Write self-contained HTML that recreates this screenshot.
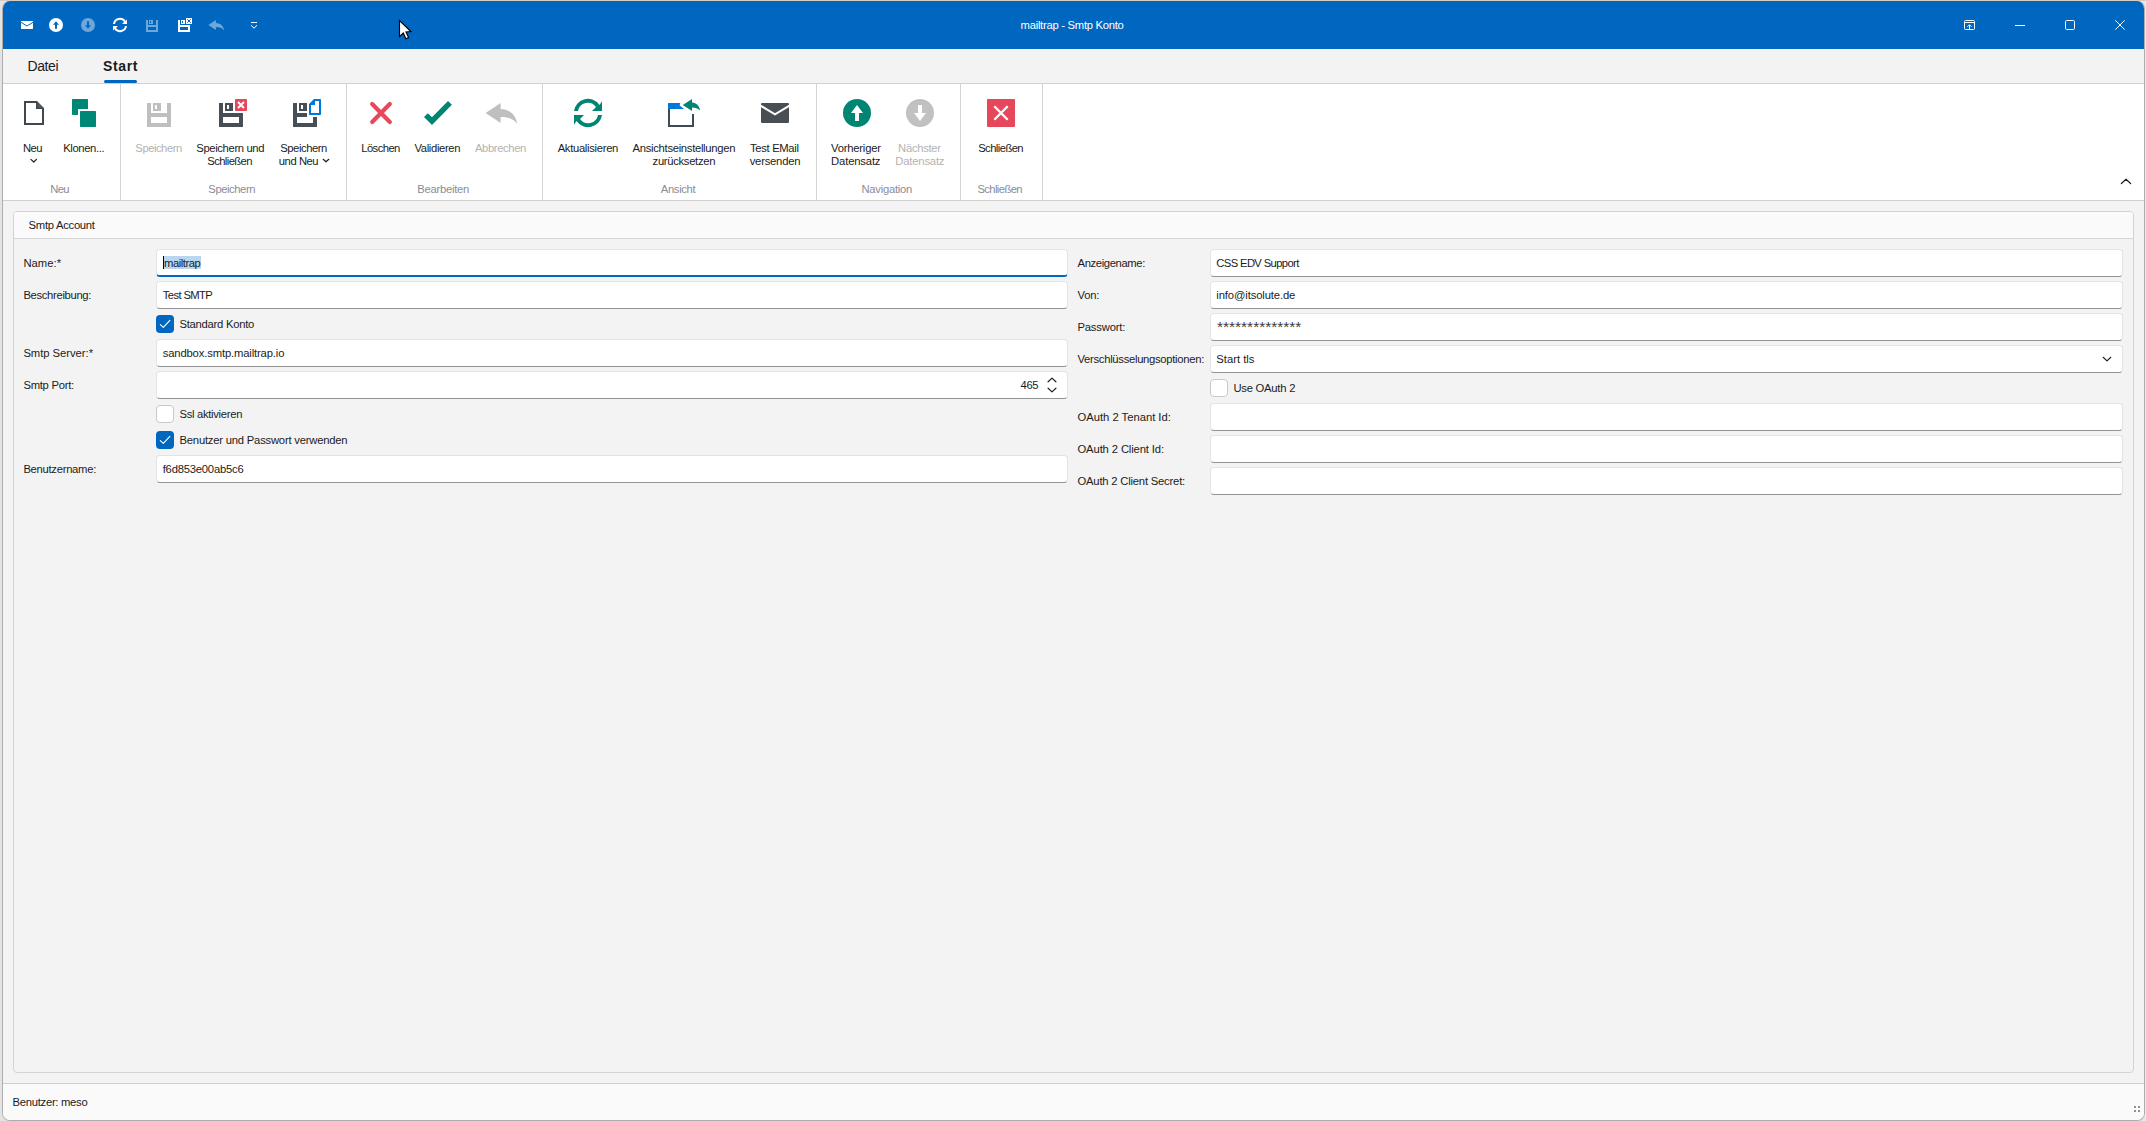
<!DOCTYPE html>
<html lang="de">
<head>
<meta charset="utf-8">
<title>mailtrap - Smtp Konto</title>
<style>
*{box-sizing:border-box;margin:0;padding:0}
html,body{width:2146px;height:1121px;overflow:hidden}
body{background:#e4e4e4;font-family:"Liberation Sans",sans-serif;font-size:11.25px;color:#1b1b1b;position:relative}
.toprow{position:absolute;left:0;top:0;width:2146px;height:1px;background:#d8ccc0}
.win{position:absolute;left:2px;top:1px;width:2143px;height:1120px;border:1px solid #adadad;border-top:0;border-radius:8px;overflow:hidden;background:#f3f3f3}
.o{position:absolute;left:-3px;top:-1px;width:2146px;height:1121px}
.abs,.o>*{position:absolute}
.title{left:0;top:1px;width:2146px;height:48px;background:#0067c0}
.ttext{left:1020px;top:18px;width:104px;height:14px;line-height:14px;color:#fff;font-size:11px;white-space:nowrap;text-align:center}
.tabs{left:0;top:49px;width:2146px;height:34px;background:#f3f3f3}
.tabline{left:0;top:83px;width:2146px;height:1px;background:#d1d1d1}
.tab{top:56px;height:18px;line-height:18px;font-size:14px;white-space:nowrap;color:#1b1b1b}
.tabul{left:104px;top:80px;width:33px;height:3px;border-radius:2px;background:#0067c0}
.ribbon{left:0;top:84px;width:2146px;height:116px;background:#fff}
.ribline{left:0;top:200px;width:2146px;height:1px;background:#cfcfcf}
.sep{top:84px;width:1px;height:116px;background:#d4d4d4}
.lbl{height:13px;line-height:13px;white-space:nowrap;text-align:center;transform:translateX(-50%);color:#1b1b1b}
.lbl.dis{color:#b4b4b4}
.cap{top:183px;height:13px;line-height:13px;white-space:nowrap;text-align:center;transform:translateX(-50%);color:#8d8d96}
.panel{left:13px;top:211px;width:2121px;height:862px;border:1px solid #d3d3d3;border-radius:4px;background:#f3f3f3}
.phead{left:14px;top:212px;width:2119px;height:26px;background:#fafafa;border-radius:3px 3px 0 0}
.pline{left:14px;top:238px;width:2119px;height:1px;background:#d6d6d6}
.ptitle{left:28px;top:218px;height:14px;line-height:14px;white-space:nowrap}
.fl{height:14px;line-height:14px;white-space:nowrap}
.inp{height:28px;background:#fff;border:1px solid #e3e3e3;border-bottom:1px solid #949494;border-radius:4px}
.inp.l{left:156px;width:912px}
.inp.r{left:1210px;width:913px}
.inp.foc{border-bottom:2px solid #0067c0}
.tx{height:14px;line-height:14px;white-space:pre;color:#1b1b1b}
.cb{width:18px;height:18px;border-radius:4px}
.cb.on{background:#0067c0}
.cb.off{background:#fff;border:1px solid #c9c9c9}
.status{left:0;top:1084px;width:2146px;height:37px;background:#fafafa}
.sline{left:0;top:1083px;width:2146px;height:1px;background:#cfcfcf}
.stext{left:12px;top:1095px;height:14px;line-height:14px;white-space:nowrap}
.dot{width:2px;height:2px;background:#919191}
svg{position:absolute;overflow:visible}
</style>
</head>
<body>
<div class="toprow"></div>
<div class="abs" style="left:2145px;top:1px;width:1px;height:1120px;background:#ececec"></div>
<div class="win"><div class="o">

<!-- TITLE BAR -->
<div class="title"></div>
<svg style="left:0;top:0" width="2146" height="49" viewBox="0 0 2146 49">
<defs>
 <g id="floppys" shape-rendering="crispEdges">
  <path d="M0 0 H2 V5 H10 V0 H12 V12 H0 Z M2 7 V10 H10 V7 Z" fill-rule="evenodd"/>
  <path d="M3 0 H7 V4 H3 Z M4 1 V3 H5 V1 Z" fill-rule="evenodd"/>
 </g>
</defs>
<!-- mail -->
<rect x="21" y="21" width="12" height="8" rx="0.4" fill="#fff"/>
<path d="M20.8 22.2 L27 26 L33.2 22.2" stroke="#0067c0" stroke-width="1" fill="none"/>
<!-- up -->
<circle cx="56" cy="25" r="7" fill="#fff"/>
<path d="M56 21.2 L59 24.7 L57 24.7 L57 28.8 L55 28.8 L55 24.7 L53 24.7 Z" fill="#0067c0"/>
<!-- down (disabled) -->
<circle cx="88" cy="25" r="7" fill="#fff" fill-opacity="0.43"/>
<path d="M88 28.8 L91 25.3 L89 25.3 L89 21.2 L87 21.2 L87 25.3 L85 25.3 Z" fill="#0067c0"/>
<!-- refresh -->
<use href="#refr" fill="#fff" transform="translate(120 25) scale(0.5)"/>
<!-- save (disabled) -->
<use href="#floppys" x="146" y="20" fill="#fff" fill-opacity="0.43"/>
<!-- save and close -->
<g fill="#fff" shape-rendering="crispEdges">
 <path d="M178 20 H180 V25 H190 V32 H178 Z M180 27 V30 H188 V27 Z" fill-rule="evenodd"/>
 <path d="M181 20 H185 V24 H181 Z M182 21 V23 H183 V21 Z" fill-rule="evenodd"/>
 <rect x="186" y="18" width="6" height="6"/>
</g>
<path d="M187.3 19.3 L190.7 22.7 M190.7 19.3 L187.3 22.7" stroke="#0067c0" stroke-width="1" fill="none"/>
<!-- undo (disabled) -->
<use href="#undo" fill="#fff" fill-opacity="0.43" transform="translate(208.4 20.1) scale(0.5)"/>
<!-- customize -->
<path d="M251 22.5 H257" stroke="#fff" stroke-width="1" fill="none"/>
<path d="M251 25.3 L254 28.2 L257 25.3" stroke="#fff" stroke-width="1" fill="none"/>
<!-- mouse cursor -->
<path d="M399.5 20.7 L399.5 36.6 L403.3 33 L405.9 38.7 L408.6 37.5 L406 32 L410.9 31.6 Z" fill="#fff" stroke="#000" stroke-width="1.15" stroke-linejoin="miter"/>
</svg>

<svg style="left:0;top:0" width="2146" height="49" viewBox="0 0 2146 49">
<g stroke="#fff" stroke-width="1" fill="none">
 <rect x="1964.5" y="20.5" width="10" height="9" rx="1"/>
 <path d="M1964.5 22.5 H1974.5 M1969.5 29 V25 M1967.4 26.8 L1969.5 24.7 L1971.6 26.8"/>
 <path d="M2015 25.5 H2025"/>
 <rect x="2065.500" y="20.500" width="9" height="9" rx="1.2"/>
 <path d="M2115.3 20.300 L2124.700 29.700 M2124.700 20.300 L2115.300 29.700"/>
</g>
</svg>


<!-- TABS -->
<div class="tabs"></div>
<div class="tabline"></div>
<div class="tabul"></div>

<!-- RIBBON -->
<div class="ribbon"></div>
<div class="ribline"></div>
<div class="sep" style="left:120px"></div>
<div class="sep" style="left:346px"></div>
<div class="sep" style="left:542px"></div>
<div class="sep" style="left:816px"></div>
<div class="sep" style="left:960px"></div>
<div class="sep" style="left:1042px"></div>
<svg style="left:0;top:0" width="2146" height="210" viewBox="0 0 2146 210">
<defs>
 <path id="refr" d="M-14 -2 A14 14 0 0 1 11.5 -8 L14 -11.7 L14 -2 L4 -2 L8 -6 A10 10 0 0 0 -10 -2 Z M14 2 A14 14 0 0 1 -11.5 8 L-14 11.7 L-14 2 L-4 2 L-8 6 A10 10 0 0 0 10 2 Z"/>
 <path id="undo" d="M0 10 L15 0 L15 6 C24.5 6.2 31 13 31.4 21 C28.5 16 23 14 15 14 L15 20 Z"/>
 <path id="arrup" d="M0 -8 L6 0 L2 0 L2 8 L-2 8 L-2 0 L-6 0 Z"/>
 <g id="floppy" shape-rendering="crispEdges">
  <path d="M0 0 H4 V10 H20 V0 H24 V24 H0 Z M4 14 V20 H20 V14 Z" fill-rule="evenodd"/>
  <path d="M6 0 H14 V8 H6 Z M8 2 V6 H10 V2 Z" fill-rule="evenodd"/>
 </g>
</defs>
<!-- Neu: document -->
<path d="M24 101 H37 L44 108 V125 H24 Z M26 103 V123 H42 V109 H36 V103 Z" fill="#3f484e" fill-rule="evenodd"/>
<path d="M37.6 102.6 L42.6 107.4 H37.6 Z" fill="#555d63"/>
<!-- Klonen -->
<g fill="#008775">
 <path d="M72.8 99 H87.2 Q88 99 88 99.8 V109 H78 V115 H72.8 Q72 115 72 114.2 V99.8 Q72 99 72.8 99 Z"/>
 <rect x="80" y="111" width="16" height="16" rx="0.8"/>
</g>
<!-- Speichern (disabled) -->
<use href="#floppy" x="147" y="103" fill="#bfbfbf"/>
<!-- Speichern und Schliessen -->
<g fill="#474f55" shape-rendering="crispEdges">
 <path d="M219 103 H223 V113 H243 V127 H219 Z M223 117 V123 H239 V117 Z" fill-rule="evenodd"/>
 <path d="M225 103 H233 V111 H225 Z M227 105 V109 H229 V105 Z" fill-rule="evenodd"/>
</g>
<rect x="235" y="99" width="12" height="12" rx="0.8" fill="#e6475a"/>
<path d="M238 102 L244 108 M244 102 L238 108" stroke="#fff" stroke-width="1.9" fill="none"/>
<!-- Speichern und Neu -->
<g fill="#474f55" shape-rendering="crispEdges">
 <path d="M293 103 H297 V113 H307 V117 H297 V123 H313 V117 H317 V127 H293 Z"/>
 <path d="M299 103 H307 V111 H299 Z M301 105 V109 H303 V105 Z" fill-rule="evenodd"/>
</g>
<path d="M314 99 H320.2 Q321 99 321 99.8 V114.2 Q321 115 320.2 115 H309.8 Q309 115 309 114.2 V104 Z M315 101 V105 H311 V113 H319 V101 Z" fill="#0078d7" fill-rule="evenodd"/>
<!-- Loeschen -->
<path d="M372.2 104 L389.8 122 M389.8 104 L372.2 122" stroke="#e8485c" stroke-width="4.2" stroke-linecap="round" fill="none"/>
<!-- Validieren -->
<path d="M427.8 113.3 L424 117 L432 124.9 L451.9 104.7 L448 101.1 L432 117.2 Z" fill="#008573"/>
<!-- Abbrechen (disabled) -->
<use href="#undo" x="485.6" y="103" fill="#bfbfbf"/>
<!-- Aktualisieren -->
<use href="#refr" x="588" y="113" fill="#008573"/>
<!-- Ansichtseinstellungen -->
<path d="M668 103.6 Q668 103 668.6 103 H680.3 L679.6 105.4 L684 109 H668 Z" fill="#0078d7"/>
<g fill="#414a50" shape-rendering="crispEdges">
 <path d="M668 109 H670 V125 H692 V114 H694 V127 H668 Z"/>
</g>
<path d="M682.8 105 L692 99 L692 102.6 C696.5 102.8 699.5 106 700 110.4 C698 108.3 695.5 107.4 692 107.4 L692 111 Z" fill="#008573"/>
<!-- Test EMail -->
<rect x="761" y="103" width="28" height="20" rx="1" fill="#474f55"/>
<path d="M760.5 105.6 L775 114.4 L789.5 105.6" stroke="#fff" stroke-width="2" fill="none"/>
<!-- Vorheriger -->
<circle cx="857" cy="113" r="14" fill="#008573"/>
<use href="#arrup" x="857" y="113" fill="#fff"/>
<!-- Naechster (disabled) -->
<circle cx="920" cy="113" r="14" fill="#c1c1c1"/>
<use href="#arrup" fill="#fff" transform="translate(920 113) scale(1 -1)"/>
<!-- Schliessen -->
<rect x="987" y="99" width="28" height="28" rx="1" fill="#e6475a"/>
<path d="M994.3 106.3 L1007.7 119.7 M1007.7 106.3 L994.3 119.7" stroke="#fff" stroke-width="2.3" fill="none"/>
<!-- dropdown chevrons under Neu and next to "und Neu" -->
<path d="M30.9 159.4 L33.7 162 L36.5 159.4" stroke="#1f1f1f" stroke-width="1.2" stroke-linecap="round" stroke-linejoin="round" fill="none"/>
<path d="M323.2 159.3 L326 161.8 L328.8 159.3" stroke="#1f1f1f" stroke-width="1.2" stroke-linecap="round" stroke-linejoin="round" fill="none"/>
<!-- collapse ribbon -->
<path d="M2121.4 183.5 L2126 179.2 L2130.6 183.5" stroke="#1f1f1f" stroke-width="1.2" stroke-linecap="round" stroke-linejoin="round" fill="none"/>
</svg>

<div class="tx" style="top:141px;letter-spacing:-0.514px;left:32.44px;transform:translateX(-50%);">Neu</div>
<div class="tx" style="top:141px;letter-spacing:-0.38px;left:83.71px;transform:translateX(-50%);">Klonen...</div>
<div class="tx" style="top:141px;letter-spacing:-0.475px;left:158.56px;transform:translateX(-50%);color:#b3b3b3;">Speichern</div>
<div class="tx" style="top:141px;letter-spacing:-0.374px;left:230.21px;transform:translateX(-50%);">Speichern und</div>
<div class="tx" style="top:154px;letter-spacing:-0.592px;left:229.60px;transform:translateX(-50%);">Schließen</div>
<div class="tx" style="top:141px;letter-spacing:-0.441px;left:303.58px;transform:translateX(-50%);">Speichern</div>
<div class="tx" style="top:154px;letter-spacing:-0.45px;left:278.8px;">und Neu</div>
<div class="tx" style="top:141px;letter-spacing:-0.578px;left:380.51px;transform:translateX(-50%);">Löschen</div>
<div class="tx" style="top:141px;letter-spacing:-0.36px;left:437.32px;transform:translateX(-50%);">Validieren</div>
<div class="tx" style="top:141px;letter-spacing:-0.38px;left:500.41px;transform:translateX(-50%);color:#b3b3b3;">Abbrechen</div>
<div class="tx" style="top:141px;letter-spacing:-0.309px;left:587.85px;transform:translateX(-50%);">Aktualisieren</div>
<div class="tx" style="top:141px;letter-spacing:-0.301px;left:683.85px;transform:translateX(-50%);">Ansichtseinstellungen</div>
<div class="tx" style="top:154px;letter-spacing:-0.315px;left:683.84px;transform:translateX(-50%);">zurücksetzen</div>
<div class="tx" style="top:141px;letter-spacing:-0.329px;left:774.34px;transform:translateX(-50%);">Test EMail</div>
<div class="tx" style="top:154px;letter-spacing:-0.216px;left:774.99px;transform:translateX(-50%);">versenden</div>
<div class="tx" style="top:141px;letter-spacing:-0.211px;left:855.89px;transform:translateX(-50%);">Vorheriger</div>
<div class="tx" style="top:154px;letter-spacing:-0.162px;left:855.72px;transform:translateX(-50%);">Datensatz</div>
<div class="tx" style="top:141px;letter-spacing:-0.291px;left:919.45px;transform:translateX(-50%);color:#b3b3b3;">Nächster</div>
<div class="tx" style="top:154px;letter-spacing:-0.184px;left:919.81px;transform:translateX(-50%);color:#b3b3b3;">Datensatz</div>
<div class="tx" style="top:141px;letter-spacing:-0.57px;left:1000.62px;transform:translateX(-50%);">Schließen</div>
<div class="tx" style="top:182px;letter-spacing:-0.747px;left:59.53px;transform:translateX(-50%);color:#8c8c95;">Neu</div>
<div class="tx" style="top:182px;letter-spacing:-0.441px;left:231.68px;transform:translateX(-50%);color:#8c8c95;">Speichern</div>
<div class="tx" style="top:182px;letter-spacing:-0.272px;left:443.16px;transform:translateX(-50%);color:#8c8c95;">Bearbeiten</div>
<div class="tx" style="top:182px;letter-spacing:-0.344px;left:678.03px;transform:translateX(-50%);color:#8c8c95;">Ansicht</div>
<div class="tx" style="top:182px;letter-spacing:-0.247px;left:886.78px;transform:translateX(-50%);color:#8c8c95;">Navigation</div>
<div class="tx" style="top:182px;letter-spacing:-0.615px;left:999.69px;transform:translateX(-50%);color:#8c8c95;">Schließen</div>

<!-- FORM -->
<div class="panel"></div>
<div class="phead"></div>
<div class="pline"></div>
<div class="inp l foc" style="top:249px"></div>
<div class="abs" style="left:164px;top:256px;width:37px;height:13px;background:#b9d6ef"></div>
<div class="abs" style="left:163px;top:256px;width:1px;height:13px;background:#000"></div>
<div class="inp l" style="top:281px"></div>
<div class="cb on" style="left:156px;top:315px"></div>
<svg style="left:156px;top:315px" width="18" height="18" viewBox="0 0 18 18"><path d="M4.3 9.6 L7.3 12.4 L13.9 5.3" fill="none" stroke="#fff" stroke-width="1.1" stroke-linecap="round" stroke-linejoin="round"/></svg>
<div class="inp l" style="top:339px"></div>
<div class="inp l" style="top:371px"></div>
<div class="cb off" style="left:156px;top:405px"></div>
<div class="cb on" style="left:156px;top:431px"></div>
<svg style="left:156px;top:431px" width="18" height="18" viewBox="0 0 18 18"><path d="M4.3 9.6 L7.3 12.4 L13.9 5.3" fill="none" stroke="#fff" stroke-width="1.1" stroke-linecap="round" stroke-linejoin="round"/></svg>
<div class="inp l" style="top:455px"></div>

<div class="inp r" style="top:249px"></div>
<div class="inp r" style="top:281px"></div>
<div class="inp r" style="top:313px"></div>
<div class="inp r" style="top:345px"></div>
<div class="cb off" style="left:1210px;top:379px"></div>
<div class="inp r" style="top:403px"></div>
<div class="inp r" style="top:435px"></div>
<div class="inp r" style="top:467px"></div>
<svg style="left:0;top:0" width="2146" height="500" viewBox="0 0 2146 500"><g fill="none" stroke="#1f1f1f" stroke-width="1.2" stroke-linecap="round" stroke-linejoin="round"><path d="M1048.1 381.8 L1052 378.1 L1055.9 381.8"/><path d="M1048.1 388.2 L1052 391.9 L1055.9 388.2"/><path d="M2103.2 357.3 L2107 360.9 L2110.8 357.3"/></g></svg>

<div class="tx" style="top:256px;letter-spacing:0.047px;left:23.4px;">Name:*</div>
<div class="tx" style="top:288px;letter-spacing:-0.326px;left:23.4px;">Beschreibung:</div>
<div class="tx" style="top:346px;letter-spacing:-0.033px;left:23.4px;">Smtp Server:*</div>
<div class="tx" style="top:378px;letter-spacing:-0.256px;left:23.4px;">Smtp Port:</div>
<div class="tx" style="top:462px;letter-spacing:-0.284px;left:23.4px;">Benutzername:</div>
<div class="tx" style="top:256px;letter-spacing:-0.464px;left:164px;">mailtrap</div>
<div class="tx" style="top:288px;letter-spacing:-0.635px;left:162.8px;">Test SMTP</div>
<div class="tx" style="top:317px;letter-spacing:-0.263px;left:179.5px;">Standard Konto</div>
<div class="tx" style="top:346px;letter-spacing:-0.144px;left:162.7px;">sandbox.smtp.mailtrap.io</div>
<div class="tx" style="top:378px;letter-spacing:-0.394px;left:1038.21px;transform:translateX(-100%);">465</div>
<div class="tx" style="top:407px;letter-spacing:-0.308px;left:179.5px;">Ssl aktivieren</div>
<div class="tx" style="top:433px;letter-spacing:-0.212px;left:179.5px;">Benutzer und Passwort verwenden</div>
<div class="tx" style="top:462px;letter-spacing:-0.217px;left:162.7px;">f6d853e00ab5c6</div>
<div class="tx" style="top:256px;letter-spacing:-0.37px;left:1077.5px;">Anzeigename:</div>
<div class="tx" style="top:288px;letter-spacing:-0.183px;left:1077.5px;">Von:</div>
<div class="tx" style="top:320px;letter-spacing:-0.199px;left:1077.5px;">Passwort:</div>
<div class="tx" style="top:352px;letter-spacing:-0.294px;left:1077.5px;">Verschlüsselungsoptionen:</div>
<div class="tx" style="top:410px;letter-spacing:-0.017px;left:1077.5px;">OAuth 2 Tenant Id:</div>
<div class="tx" style="top:442px;letter-spacing:-0.128px;left:1077.5px;">OAuth 2 Client Id:</div>
<div class="tx" style="top:474px;letter-spacing:-0.202px;left:1077.5px;">OAuth 2 Client Secret:</div>
<div class="tx" style="top:256px;letter-spacing:-0.635px;left:1216.3px;">CSS EDV Support</div>
<div class="tx" style="top:288px;letter-spacing:-0.121px;left:1216.3px;">info@itsolute.de</div>
<div class="tx" style="top:318px;font-size:15.5px;letter-spacing:-0.011px;left:1217px;color:#3c3c3c;height:18px;line-height:18px;">**************</div>
<div class="tx" style="top:352px;letter-spacing:-0.005px;left:1216.3px;">Start tls</div>
<div class="tx" style="top:381px;letter-spacing:-0.238px;left:1233.4px;">Use OAuth 2</div>

<!-- STATUS -->
<div class="sline"></div>
<div class="status"></div>
<div class="dot" style="left:2134px;top:1106px"></div>
<div class="dot" style="left:2138px;top:1106px"></div>
<div class="dot" style="left:2134px;top:1110px"></div>
<div class="dot" style="left:2138px;top:1110px"></div>

<div class="tx" style="top:18px;letter-spacing:-0.276px;left:1020.6px;color:#fff;">mailtrap - Smtp Konto</div>
<div class="tx" style="top:57px;font-size:14px;letter-spacing:-0.398px;left:27.5px;height:18px;line-height:18px;">Datei</div>
<div class="tx" style="top:57px;font-size:14px;font-weight:bold;letter-spacing:0.619px;left:103px;height:18px;line-height:18px;">Start</div>
<div class="tx" style="top:1095px;letter-spacing:-0.285px;left:12.6px;">Benutzer: meso</div>
<div class="tx" style="top:218px;letter-spacing:-0.277px;left:28.6px;">Smtp Account</div>
</div></div>
</body>
</html>
